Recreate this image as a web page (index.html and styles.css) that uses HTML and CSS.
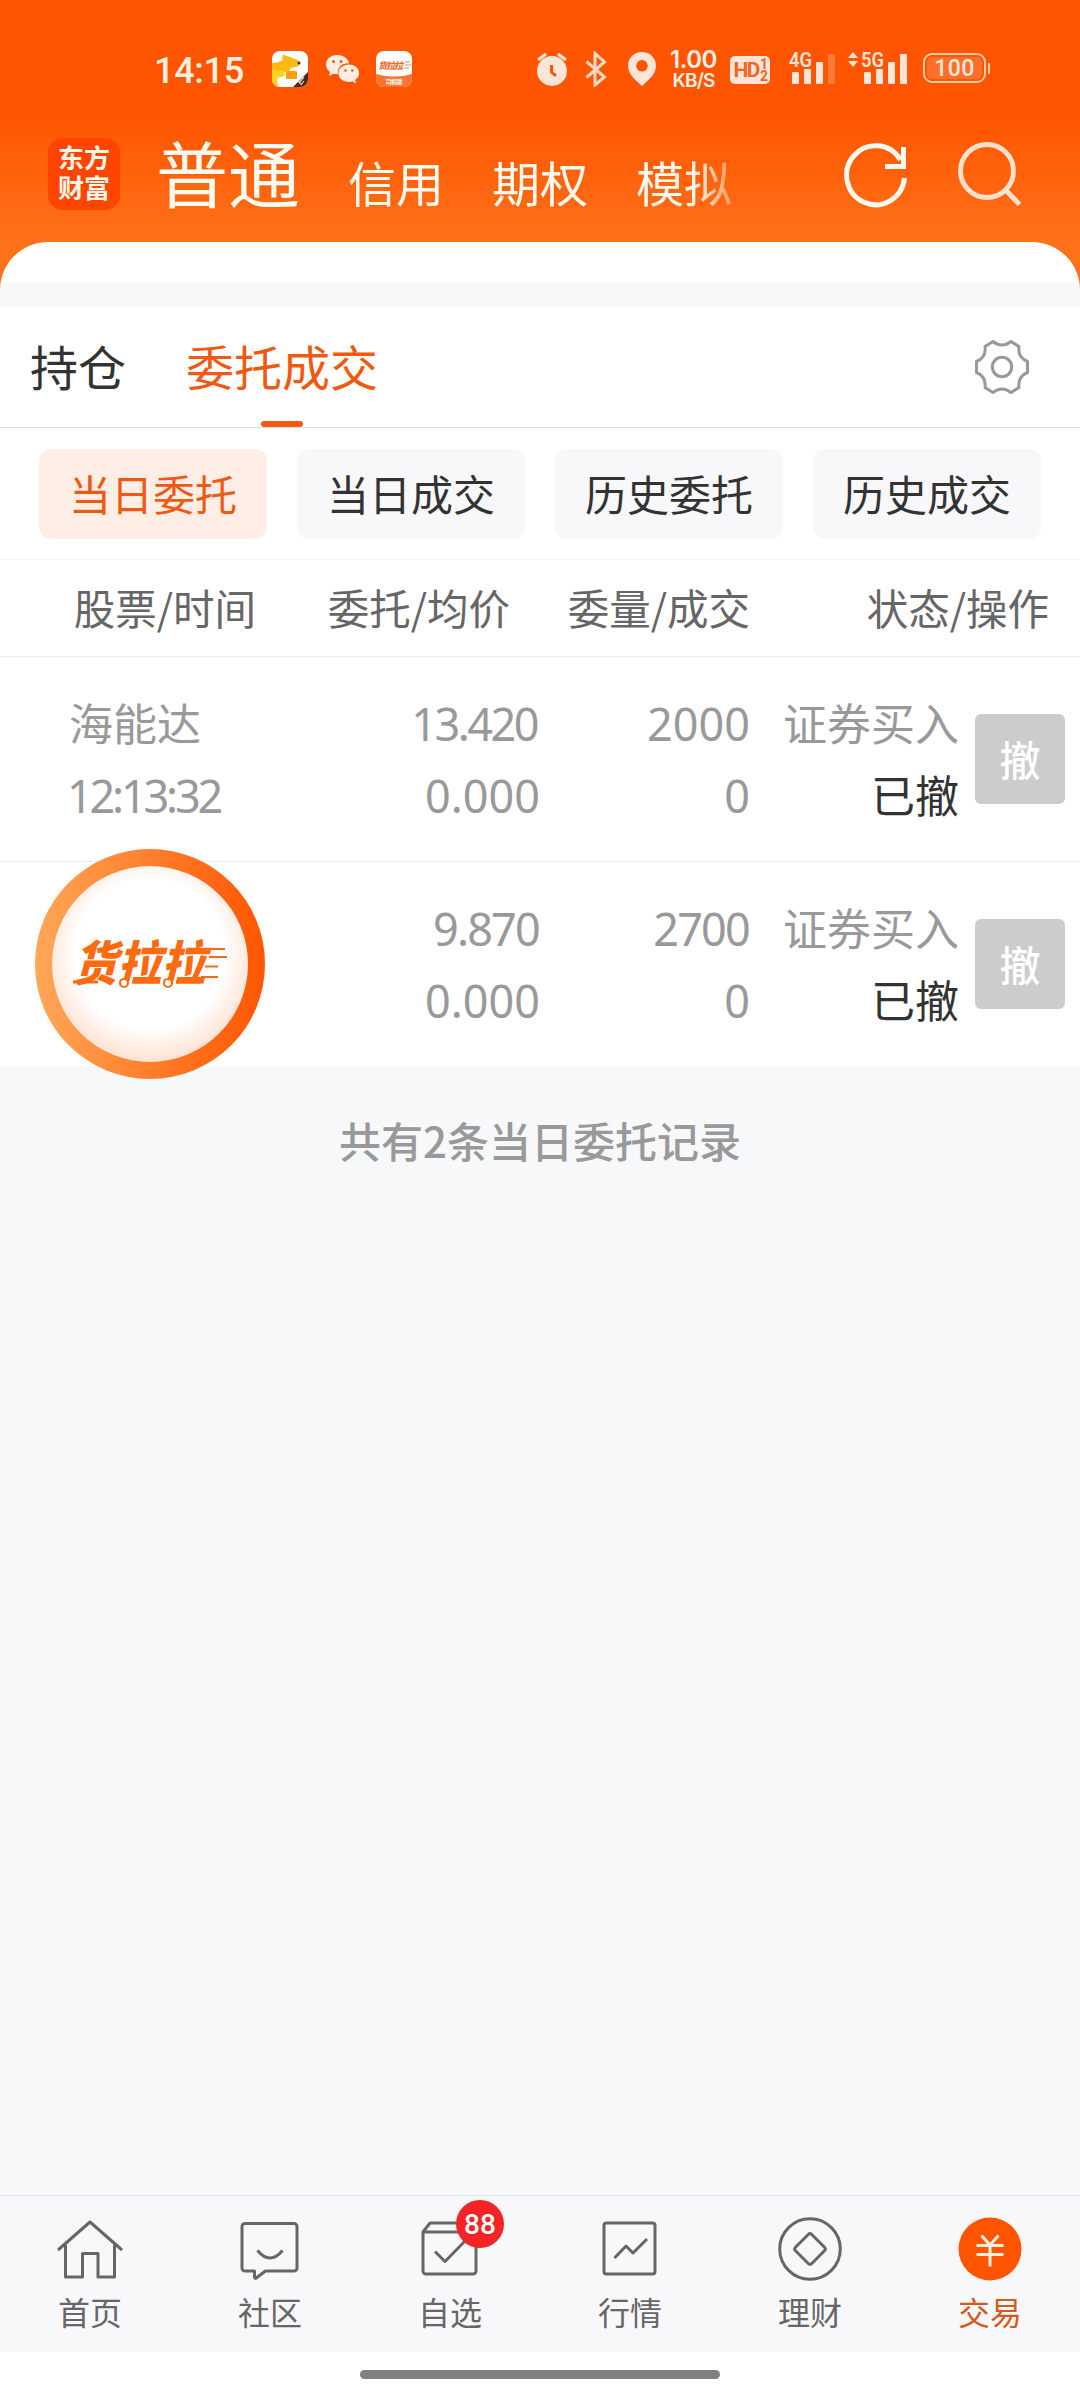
FILE: index.html
```html
<!DOCTYPE html>
<html lang="zh-CN">
<head>
<meta charset="utf-8">
<title>委托成交</title>
<link rel="stylesheet" href="styles.css">
</head>
<body>
<div class="app">
  <header class="top">
    <div class="status">
      <span class="clock">14:15</span>
      <svg class="s-app" width="36" height="36" viewBox="0 0 36 36">
        <defs><clipPath id="r1"><rect width="36" height="36" rx="8"/></clipPath></defs>
        <g clip-path="url(#r1)">
          <rect width="36" height="36" fill="#fff"/>
          <path d="M0 12c5 0 8-1 11-3-1-1-1-3 0-6 3 3 8 2 11 5 3 0 5 1 6 4-1 2-2 4-5 4l-4 1-2 3-5 1H0z" fill="#fdb813"/>
          <path d="M0 18c6 3 9 1 12 2l1 5-8 2 1 9H0z" fill="#ffd21e"/>
          <rect x="14" y="20" width="11" height="8" rx="1" fill="#ff9d0a"/>
          <circle cx="27" cy="12" r="1.500" fill="#4a2614"/>
          <path d="M36 21v15H21z" fill="#4a241c"/>
          <path d="M27 32l5-6M29 34l3-4M26 30l3 3" stroke="#e9d6cc" stroke-width="1.200"/>
        </g>
      </svg>
      <svg class="s-wechat" width="35" height="30" viewBox="0 0 35 30">
        <path d="M12 1C5.500 1 1 5.400 1 10.600c0 3 1.500 5.600 4 7.400l-1 4 4.300-2.200c1.300.3 2.500.4 4.700.3C12 13.500 17 9 24 9.300 23 4.500 18 1 12 1z" fill="#ffede4"/>
        <path d="M24 10.500c-6 0-10.500 3.800-10.500 8.700S18 28 24 28c1.200 0 2.400-.2 3.500-.5L31 29.500l-.8-3.600c2.500-1.600 3.800-4 3.800-6.700 0-4.900-4.400-8.700-10-8.700z" fill="#ffede4"/>
        <g fill="#ff5500"><circle cx="8.500" cy="7.500" r="1.500"/><circle cx="16" cy="7.500" r="1.500"/><circle cx="20.500" cy="16.500" r="1.300"/><circle cx="27.300" cy="16.500" r="1.300"/></g>
      </svg>
      <svg class="s-hll" width="36" height="36" viewBox="0 0 36 36">
        <defs><clipPath id="r2"><rect width="36" height="36" rx="8"/></clipPath></defs>
        <g clip-path="url(#r2)">
          <rect width="36" height="36" fill="#fff"/>
          <path d="M0 23q18 5 36 0v13H0z" fill="#ff7430"/>
          <text class="hll-mini" x="3" y="18" transform="skewX(-12) translate(3 0)" textLength="25">货拉拉</text>
          <path d="M29 11h5M29 14h6M28 17h5" stroke="#f26a1b" stroke-width=".8"/>
          <text class="hll-sub" x="9.500" y="33" textLength="17">司机版</text>
        </g>
      </svg>
      <svg class="s-alarm" width="32" height="36" viewBox="536 51 32 36">
        <circle cx="552" cy="71" r="15" fill="#ffe5d8"/>
        <path d="M538 60l8-6M566 60l-8-6" stroke="#ffe5d8" stroke-width="3.200"/>
        <path d="M551.500 65v7l4.500 4" fill="none" stroke="#ff5500" stroke-width="3"/>
      </svg>
      <svg class="s-bt" width="24" height="36" viewBox="584 51 24 36">
        <path d="M586.500 61.500L604.500 77l-9.500 8V53.500l9.500 8.500-18 15.500" fill="none" stroke="#ffd9c6" stroke-width="3"/>
      </svg>
      <svg class="s-pin" width="30" height="36" viewBox="627 51 30 36">
        <path fill-rule="evenodd" d="M642 52c-8 0-14 6-14 13.800 0 7.500 5.500 13 14 20.200 8.500-7.200 14-12.700 14-20.200C656 58 650 52 642 52zm0 8a5.800 5.800 0 1 1 0 11.600 5.800 5.800 0 0 1 0-11.600z" fill="#ffe5d8"/>
      </svg>
      <div class="speed"><b>1.00</b><span>KB/S</span></div>
      <div class="hd"><span>HD</span><span class="hd-n">1<br>2</span></div>
      <svg class="s-4g" width="50" height="42" viewBox="787 44 50 42">
        <text class="net" x="789" y="67" textLength="23" lengthAdjust="spacingAndGlyphs">4G</text>
        <g fill="#ffe5d8"><rect x="792" y="72" width="7" height="12" rx="1"/><rect x="804" y="69" width="7" height="15" rx="1"/><rect x="816" y="62" width="7" height="22" rx="1"/><rect x="828" y="54" width="7" height="30" rx="1" opacity=".25"/></g>
      </svg>
      <svg class="s-5g" width="62" height="42" viewBox="847 44 62 42">
        <path d="M848 58l5-6 5 6zM848 61l5 6 5-6z" fill="#ffe5d8"/>
        <text class="net" x="861" y="67" textLength="23" lengthAdjust="spacingAndGlyphs">5G</text>
        <g fill="#ffe5d8"><rect x="864" y="72" width="7" height="12" rx="1"/><rect x="876" y="69" width="7" height="15" rx="1"/><rect x="888" y="62" width="7" height="22" rx="1"/><rect x="900" y="54" width="7" height="30" rx="1"/></g>
      </svg>
      <div class="battery"><span>100</span></div><i class="nub"></i>
    </div>
    <div class="nav-top">
      <div class="logo">东方<br>财富</div>
      <nav class="accounts">
        <a class="acc-main">普通</a><a>信用</a><a>期权</a><a>模拟</a>
      </nav>
      <svg class="i-refresh" width="66" height="68" viewBox="843 141 66 68">
        <path d="M904.500 178a29 29.500 0 1 1-4-18" fill="none" stroke="#fff8ee" stroke-width="5"/>
        <path d="M903.500 147v19.500H885" fill="none" stroke="#fff8ee" stroke-width="5"/>
      </svg>
      <svg class="i-search" width="66" height="68" viewBox="956 139 66 68">
        <circle cx="987" cy="171" r="26.500" fill="none" stroke="#ffe0cc" stroke-width="5"/>
        <path d="M1005.500 190l14 14.500" stroke="#ffe0cc" stroke-width="5"/>
      </svg>
    </div>
    <div class="sheet"></div>
  </header>

  <main class="panel">
    <div class="tabs">
      <a>持仓</a><a class="on">委托成交</a>
      <svg class="gear" width="60" height="60" viewBox="-30 -30 60 60" fill="none" stroke="#999" stroke-width="3" stroke-linejoin="round">
        <path d="M-9 -25.500Q0 -18.500 9 -25.500L17 -20.500Q15.500 -9.500 25.500 -5.500V5.500Q15.500 9.500 17 20.500L9 25.500Q0 18.500 -9 25.500L-17 20.500Q-15.500 9.500 -25.500 5.500V-5.500Q-15.500 -9.500 -17 -20.500Z"/>
        <circle r="9.700"/>
      </svg>
    </div>
    <div class="pills">
      <a class="on">当日委托</a><a>当日成交</a><a>历史委托</a><a>历史成交</a>
    </div>
    <div class="thead"><span>股票/时间</span><span>委托/均价</span><span>委量/成交</span><span>状态/操作</span></div>
    <div class="row">
      <div class="c-name"><p>海能达</p><p class="time">12:13:32</p></div>
      <div class="c-num"><p class="tighter">13.420</p><p>0.000</p></div>
      <div class="c-num"><p>2000</p><p>0</p></div>
      <div class="c-state"><p>证券买入</p><p class="done">已撤</p></div>
      <button>撤</button>
    </div>
    <div class="row">
      <div class="c-name">
        <div class="float">
          <svg width="230" height="230" viewBox="35 849 230 230">
            <defs>
              <linearGradient id="ring"><stop offset="0" stop-color="#ffa858"/><stop offset="1" stop-color="#ff5500"/></linearGradient>
              <radialGradient id="glow" cx=".5" cy=".45" r=".56"><stop offset=".68" stop-color="#fff"/><stop offset="1" stop-color="#ffe0cf"/></radialGradient>
            </defs>
            <circle cx="150" cy="964" r="115" fill="url(#ring)"/>
            <circle cx="150" cy="964" r="98" fill="url(#glow)"/>
            <text class="brand" transform="translate(73 981) skewX(-14)" x="0" y="0" textLength="132" lengthAdjust="spacingAndGlyphs">货拉拉</text>
            <g stroke="#ff6a10" fill="none">
              <path d="M211 949h14M209 957h18M205 966.500h13M201 977h17" stroke-width="2"/>
              <path d="M73 982h25M133 982h27M176 982h24" stroke-width="3"/>
              <circle cx="124" cy="983" r="4" fill="#fff" stroke-width="2"/><circle cx="168" cy="983" r="4" fill="#fff" stroke-width="2"/>
            </g>
          </svg>
        </div>
      </div>
      <div class="c-num"><p class="tight">9.870</p><p>0.000</p></div>
      <div class="c-num"><p class="tight">2700</p><p>0</p></div>
      <div class="c-state"><p>证券买入</p><p class="done">已撤</p></div>
      <button>撤</button>
    </div>
  </main>
  <p class="summary">共有2条当日委托记录</p>

  <footer class="tabbar">
    <a><svg viewBox="0 0 72 72"><path d="M4 37L36 9l32 28M11.500 32v32H28.500V40.500H44V64H60.500V32"/></svg>首页</a>
    <a><svg viewBox="0 0 72 72"><path d="M11 10.500H60a3 3 0 0 1 3 3V55a3 3 0 0 1-3 3H31.500L21.500 65.500 20.500 64.500V58H11a3 3 0 0 1-3-3V13.500a3 3 0 0 1 3-3z"/><path d="M23.500 37.500q12.500 15 25 0"/></svg>社区</a>
    <a><svg viewBox="0 0 72 72"><path d="M9 19L16 10H62V58a3 3 0 0 1-3 3H12a3 3 0 0 1-3-3zM9 19H62M21 38.500L31 48.500 52 27"/></svg><em class="badge">88</em>自选</a>
    <a><svg viewBox="0 0 72 72"><rect x="10" y="10" width="51" height="51" rx="2.500"/><path d="M20.500 45L32 33l7 7 14-14"/></svg>行情</a>
    <a><svg viewBox="0 0 72 72"><circle cx="36" cy="36" r="30.300"/><rect x="24.500" y="24.500" width="23" height="23" rx="2.500" transform="rotate(45 36 36)"/></svg>理财</a>
    <a class="on"><svg viewBox="0 0 72 72"><circle cx="36" cy="36" r="31.500" fill="#ff5500" stroke="none"/><path d="M27.500 22.500L36 32l8.500-9.500M36 32V53.500M22.500 32.500h27M22.500 41.500h27" stroke="#ffeee2" stroke-width="3"/></svg>交易</a>
  </footer>
  <div class="gesture"><i></i></div>
</div>
</body>
</html>
```
FILE: styles.css
```css
* { box-sizing: border-box; margin: 0; padding: 0; }
body { width: 1080px; height: 2400px; font-family: "Noto Sans CJK SC", sans-serif; background: #f7f8fa; overflow: hidden; }
.app { width: 1080px; height: 2400px; display: flex; flex-direction: column; }
svg { display: block; flex: none; }
i, em { font-style: normal; }

.top { height: 307px; background: linear-gradient(#ff5500 0, #ff5500 115px, #ff7119 242px, #ff7119 100%); }
.status { height: 110px; padding: 0 0 0 154px; display: flex; align-items: flex-start; }
.clock { width: 90px; margin-top: 49px; font: 500 36px/44px Roboto, sans-serif; color: #fff0e0; letter-spacing: -.3px; }
.s-app { margin: 51px 0 0 28px; }
.s-wechat { margin: 54px 0 0 17px; }
.s-hll { margin: 51px 0 0 16px; }
.hll-mini { font: 900 9px "Noto Sans CJK SC", sans-serif; fill: #f26a1b; }
.hll-sub { font: 700 6px "Noto Sans CJK SC", sans-serif; fill: #fff; }
.s-alarm { margin: 51px 0 0 124px; }
.s-bt { margin: 51px 0 0 16px; }
.s-pin { margin: 51px 0 0 19px; }
.speed { margin: 49px 0 0 10px; width: 53px; display: flex; flex-direction: column; align-items: center; color: #fff0e6; font-family: Inter, sans-serif; }
.speed b { font-size: 24px; line-height: 22px; font-weight: 600; letter-spacing: -.5px; }
.speed span { font-size: 19px; line-height: 19px; font-weight: 600; letter-spacing: -.8px; }
.hd { margin: 56px 0 0 10px; width: 40px; height: 28px; border-radius: 5px; background: #ffe5d8; color: #f0651f; display: flex; justify-content: center; gap: 1px; font: 700 21px/28px Roboto, sans-serif; letter-spacing: -1.5px; }
.hd-n { padding-top: 2px; font-size: 14px; line-height: 12px; }
.s-4g { margin: 44px 0 0 17px; }
.s-5g { margin: 44px 0 0 10px; }
.net { font: 600 20px Roboto, sans-serif; fill: #ffe5d8; }
.battery { margin: 53px 0 0 14px; width: 63px; height: 30px; border: 2px solid #ffcba5; border-radius: 9px; padding: 2px; }
.battery span { display: block; height: 22px; border-radius: 5px; background: #ff6f2c; color: #ffe8d8; text-align: center; font: 500 23px/23px Roboto, sans-serif; letter-spacing: .5px; }
.nub { margin: 63px 0 0 2px; width: 2px; height: 11px; background: #ffcba5; border-radius: 1px; }

.nav-top { height: 132px; padding-left: 48px; display: flex; align-items: flex-start; }
.logo { margin-top: 28px; width: 72px; height: 72px; border-radius: 15px; background: #ff4500; color: #fff6ea; text-align: center; padding-top: 4px; font: 700 26px/30px "Noto Sans CJK SC", sans-serif; }
.accounts { margin: 11px 0 0 36px; width: 580px; display: flex; align-items: baseline; gap: 48px; color: #fffaf0; font-size: 48px; line-height: 100px; -webkit-mask-image: linear-gradient(90deg, #000 535px, rgba(0,0,0,.35) 576px); mask-image: linear-gradient(90deg, #000 535px, rgba(0,0,0,.35) 576px); }
.acc-main { font-size: 72px; }
.i-refresh { margin: 31px 0 0 107px; }
.i-search { margin: 29px 0 0 47px; }
.sheet { height: 65px; border-radius: 48px 48px 0 0; background: linear-gradient(#fff 41px, #f7f8fa 41px); }

.panel { background: #fff; }
.tabs { height: 121px; padding-left: 30px; border-bottom: 1px solid #ddd; display: flex; gap: 60px; font-size: 48px; line-height: 117px; color: #333; }
.tabs a { display: flex; flex-direction: column; align-items: center; height: 120px; }
.tabs .on { color: #f05a10; }
.tabs .on::after { content: ""; flex: none; width: 42px; height: 6px; margin-top: -3px; border-radius: 3px; background: #f05a10; }
.gear { margin: 30px 48px 0 auto; }
.pills { height: 132px; padding: 21px 39px 0; display: flex; gap: 30px; border-bottom: 1px solid #f3f3f3; }
.pills a { width: 228px; height: 90px; border-radius: 12px; background: #f8f8fb; color: #333; font-size: 42px; line-height: 88px; text-align: center; }
.pills .on { background: #ffeee6; color: #ef5a13; }
.thead { height: 97px; display: grid; grid-template-columns: 256px 254px 240px 299px; border-bottom: 1px solid #eee; color: #666; font-size: 41.500px; line-height: 95px; text-align: right; }
.row { height: 205px; display: grid; grid-template-columns: 330px 210px 210px 209px 90px; border-bottom: 1px solid #eee; color: #999; font-size: 44px; line-height: 72px; padding-top: 31px; }
.row:last-child { border: 0; height: 204px; }
.c-name { padding-left: 69px; }
.c-name p:first-child, .c-state { margin-top: -2px; }
.c-name p:first-child { margin-bottom: 2px; }
.c-num { text-align: right; font-family: "Noto Sans", sans-serif; font-size: 45px; }
.tight { letter-spacing: -1.800px; padding-right: 1px; }
.tighter { letter-spacing: -2.500px; padding-right: 3px; }
.time { font-family: "Noto Sans", sans-serif; font-size: 45px; letter-spacing: -3.200px; margin-left: -2px; }
.c-state { text-align: right; }
.done { color: #333; }
.row button { margin: 26px 0 0 16px; width: 90px; height: 90px; border: 0; border-radius: 6px; background: #ccc; color: #fff; font: 500 41px/88px "Noto Sans CJK SC", sans-serif; padding-bottom: 2px; }
.float { position: absolute; left: 35px; top: 849px; }
.brand { font: 900 48px "Noto Sans CJK SC", sans-serif; fill: #ff6a10; }
.summary { margin-top: 42px; text-align: center; color: #999; font-weight: 500; font-size: 42px; line-height: 64px; }

.tabbar { margin-top: auto; height: 157px; border-top: 1px solid #e0e3e5; background: #f8f8fb; display: flex; padding-top: 17px; }
.tabbar a { position: relative; width: 180px; display: flex; flex-direction: column; align-items: center; color: #666; font-size: 32px; line-height: 52px; }
.tabbar svg { width: 72px; height: 72px; fill: none; stroke: #666; stroke-width: 3; stroke-linejoin: round; }
.tabbar .on { color: #d9591a; }
.badge { position: absolute; left: 96px; top: -13px; width: 48px; height: 48px; border-radius: 50%; background: #f52424; color: #fff; text-align: center; font: 500 28px/49px Roboto, sans-serif; }
.gesture { height: 48px; background: #fff; padding: 18px 360px 0; }
.gesture i { display: block; height: 9px; border-radius: 5px; background: #808080; }
```
